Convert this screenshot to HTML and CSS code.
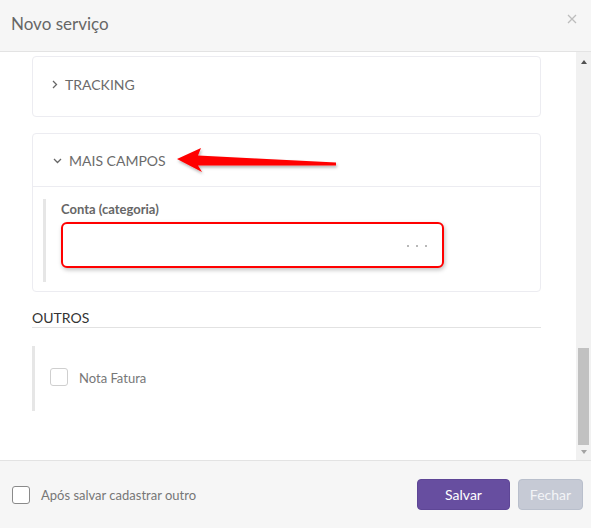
FILE: index.html
```html
<!DOCTYPE html>
<html lang="pt">
<head>
<meta charset="utf-8">
<title>Novo serviço</title>
<link rel="stylesheet" href="styles.css">
</head>
<body>
<div class="modal">
  <header class="header">
    <h1 class="title">Novo serviço</h1>
    <button class="close" aria-label="Fechar">
      <svg width="10" height="10" viewBox="0 0 10 10"><path d="M1 1L9 9M9 1L1 9" stroke="#bdbdbd" stroke-width="1.3" fill="none"/></svg>
    </button>
  </header>
  <div class="main">
    <div class="content">
      <section class="panel panel-collapsed">
        <div class="panel-head">
          <svg class="chev" width="6" height="9" viewBox="0 0 6 9"><path d="M1 1L4.5 4.5L1 8" stroke="#666" stroke-width="1.3" fill="none"/></svg>
          <span class="panel-title">Tracking</span>
        </div>
      </section>
      <section class="panel">
        <div class="panel-head panel-head-open">
          <svg class="chev-down" width="9" height="6" viewBox="0 0 9 6"><path d="M1 1L4.5 4.5L8 1" stroke="#666" stroke-width="1.3" fill="none"/></svg>
          <span class="panel-title">Mais campos</span>
        </div>
        <div class="panel-body">
          <div class="field">
            <label class="label">Conta (categoria)</label>
            <div class="input">
              <span class="dots"><i></i><i></i><i></i></span>
            </div>
          </div>
        </div>
      </section>
      <h2 class="section-title">OUTROS</h2>
      <div class="group">
        <label class="check-row">
          <span class="checkbox"></span>
          <span class="check-text">Nota Fatura</span>
        </label>
      </div>
    </div>
    <div class="scrollbar">
      <span class="sb-up"></span>
      <span class="sb-track"><span class="sb-thumb"></span></span>
      <span class="sb-down"></span>
    </div>
  </div>
  <footer class="footer">
    <label class="footer-check">
      <span class="checkbox checkbox-dark"></span>
      <span class="footer-text">Após salvar cadastrar outro</span>
    </label>
    <div class="actions">
      <button class="btn btn-primary">Salvar</button>
      <button class="btn btn-disabled">Fechar</button>
    </div>
  </footer>
  <svg class="annotation" width="591" height="528" viewBox="0 0 591 528">
    <defs>
      <filter id="sh" x="-10%" y="-50%" width="120%" height="200%">
        <feDropShadow dx="1" dy="2" stdDeviation="1.5" flood-color="#000" flood-opacity="0.3"/>
      </filter>
    </defs>
    <path d="M177 159 L201 148 L198 155.5 L336 162.5 L336 165.5 L198 165.5 L202 172 Z" fill="#ff0000" filter="url(#sh)"/>
  </svg>
</div>
</body>
</html>
```
FILE: styles.css
```css
* { box-sizing: border-box; }
html, body { margin: 0; padding: 0; }
body {
  font-family: Lato, "Open Sans", "Liberation Sans", sans-serif;
  background: #fff;
  color: #666;
}
.modal {
  position: relative;
  width: 591px;
  height: 528px;
  display: flex;
  flex-direction: column;
  overflow: hidden;
}
.header {
  height: 52px;
  flex: none;
  background: #f6f6f6;
  border-bottom: 1px solid #e3e3e3;
  display: flex;
  align-items: center;
  justify-content: space-between;
  padding: 0 14px 4px 11px;
}
.title {
  margin: 0;
  font-size: 17px;
  font-weight: 400;
  color: #666;
}
.close {
  border: 0;
  background: none;
  padding: 0;
  display: flex;
  margin-top: -10px;
}
.main {
  height: 408px;
  flex: none;
  display: flex;
}
.content {
  flex: 1;
  padding: 4px 35px 0 32px;
  overflow: hidden;
}
.panel {
  border: 1px solid #ececf1;
  border-radius: 4px;
  background: #fff;
  margin-bottom: 16px;
}
.panel-collapsed .panel-head { height: 59px; padding-bottom: 5px; }
.panel-head {
  display: flex;
  align-items: center;
  padding-left: 19px;
  height: 52px;
}
.panel-head-open {
  border-bottom: 1px solid #ececf1;
  height: 53px;
  padding-left: 20px;
}
.chev { margin-right: 7px; margin-top: 1px; }
.chev-down { margin-right: 7px; margin-top: 1px; }
.panel-title {
  text-transform: uppercase;
  font-size: 14px;
  color: #6b6b6b;
  letter-spacing: 0;
}
.panel-body {
  padding: 12px 10px 9px 10px;
}
.field {
  border-left: 3px solid #e6e6e6;
  padding: 2px 0 14px 15px;
}
.label {
  display: block;
  font-size: 13px;
  font-weight: 700;
  color: #666;
  line-height: 16px;
  margin-bottom: 5px;
}
.input {
  width: 383px;
  height: 46px;
  border: 2px solid #ff0000;
  border-radius: 6px;
  box-shadow: 1px 2px 4px rgba(0,0,0,0.25);
  display: flex;
  align-items: center;
  justify-content: flex-end;
  padding-right: 15px;
  background: #fff;
}
.dots { display: flex; gap: 7px; margin-top: 2px; }
.dots i {
  display: block;
  width: 2px;
  height: 2px;
  border-radius: 50%;
  background: #a0a0a0;
}
.section-title {
  margin: 17px 0 0 0;
  font-size: 14px;
  font-weight: 400;
  color: #333;
  line-height: 17px;
  padding-bottom: 1px;
  border-bottom: 1px solid #e2e2e2;
}
.group {
  margin-top: 18px;
  border-left: 3px solid #e6e6e6;
  height: 65px;
  padding: 22px 0 0 15px;
  display: flex;
  align-items: flex-start;
}
.check-row { display: flex; align-items: center; }
.checkbox {
  display: block;
  width: 18px;
  height: 18px;
  border: 1px solid #cfcfcf;
  border-radius: 3px;
  background: #fff;
  flex: none;
}
.checkbox-dark { border-color: #8a8a8a; }
.check-text {
  margin-left: 11px;
  font-size: 13px;
  color: #777;
  margin-top: 2px;
}
.scrollbar {
  width: 15px;
  flex: none;
  background: #f1f1f1;
  display: flex;
  flex-direction: column;
  align-items: center;
  padding: 8px 0 6px 0;
}
.sb-up {
  width: 0; height: 0;
  border-left: 3.5px solid transparent;
  border-right: 3.5px solid transparent;
  border-bottom: 4px solid #505050;
}
.sb-track {
  flex: 1;
  width: 100%;
  display: flex;
  flex-direction: column;
  justify-content: flex-end;
  padding: 0 0 5px 2px;
}
.sb-thumb {
  display: block;
  width: 11px;
  height: 97px;
  background: #c1c1c1;
}
.sb-down {
  width: 0; height: 0;
  border-left: 3.5px solid transparent;
  border-right: 3.5px solid transparent;
  border-top: 4px solid #a3a3a3;
}
.footer {
  flex: 1;
  background: #f6f6f6;
  border-top: 1px solid #e3e3e3;
  display: flex;
  align-items: center;
  justify-content: space-between;
  padding: 0 8px 0 12px;
}
.footer-check { display: flex; align-items: center; }
.footer-text {
  margin-left: 11px;
  font-size: 13px;
  color: #777;
}
.actions { display: flex; gap: 8px; }
.btn {
  height: 31px;
  border-radius: 4px;
  font-family: inherit;
  font-size: 14px;
  color: #fff;
  padding: 0;
}
.btn-primary {
  width: 93px;
  background: #674ea0;
  border: 1px solid #5e4696;
}
.btn-disabled {
  width: 65px;
  background: #c6cad5;
  border: 1px solid #b9bfcc;
  color: #f3f4f7;
}
.annotation {
  position: absolute;
  left: 0;
  top: 0;
  pointer-events: none;
}
```
